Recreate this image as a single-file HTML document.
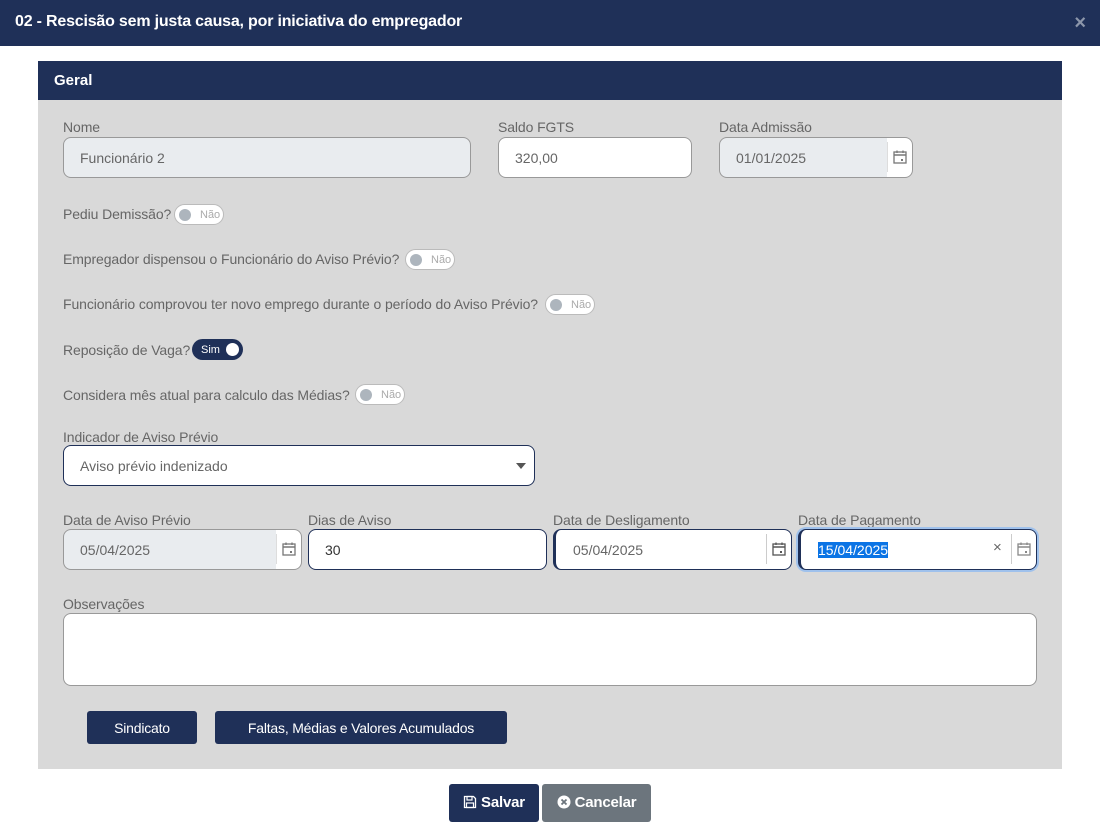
<!DOCTYPE html>
<html><head><meta charset="utf-8"><style>
*{box-sizing:border-box;margin:0;padding:0}
body{width:1100px;height:834px;background:#fff;font-family:"Liberation Sans",sans-serif;font-size:14px;color:#666;position:relative;overflow:hidden}
.a{position:absolute}
.top{left:0;top:0;width:1100px;height:46px;background:#1f3058;color:#fff;font-weight:bold;font-size:16px;padding:13px 0 0 15px;letter-spacing:-0.2px}
.x{right:14px;top:12px;color:#8c96aa;font-size:20px;font-weight:bold}
.panel{left:38px;top:61px;width:1024px;height:708px;background:#d9d9d9}
.ph{left:38px;top:61px;width:1024px;height:39px;background:#1f3058;color:#fff;font-weight:bold;font-size:15px;padding:11px 0 0 16px}
.lbl{font-size:14px;color:#666;letter-spacing:-0.1px}
.in{border:1px solid #999;border-radius:8px;background:#fff;color:#666;padding:12px 0 0 16px;height:41px}
.dis{background:#e9ecef}
.nav{border-color:#1f3058}
.tg{border:1px solid #bbb;border-radius:11px;background:#fff;height:21px;width:50px;font-size:11px;color:#aaa;padding:4px 0 0 25px}
.tg:before{content:"";position:absolute;left:4px;top:4px;width:12px;height:12px;border-radius:50%;background:#adb5bd}
.cal{width:16px;height:16px}
.btn{background:#1f3058;color:#fff;border-radius:3px;font-size:14px;text-align:center;padding-top:9px;height:33px;letter-spacing:-0.2px}
</style></head><body>
<div class="a top">02 - Rescisão sem justa causa, por iniciativa do empregador</div>
<div class="a x">×</div>
<div class="a panel"></div>
<div class="a ph">Geral</div>

<div class="a lbl" style="left:63px;top:119px">Nome</div>
<div class="a in dis" style="left:63px;top:137px;width:408px">Funcionário 2</div>
<div class="a lbl" style="left:498px;top:119px">Saldo FGTS</div>
<div class="a in" style="left:498px;top:137px;width:194px">320,00</div>
<div class="a lbl" style="left:719px;top:119px">Data Admissão</div>
<div class="a in" style="left:719px;top:137px;width:194px;background:linear-gradient(90deg,#e9ecef 167px,#fff 167px)">01/01/2025</div>
<div class="a" style="left:887px;top:142px;width:1px;height:30px;background:#ddd"></div>

<svg class="a cal" style="left:892px;top:149px" viewBox="0 0 16 16"><rect x="2" y="3" width="12" height="11" fill="none" stroke="#777" stroke-width="1.3"/><line x1="2" y1="6" x2="14" y2="6" stroke="#777" stroke-width="1.5"/><line x1="5" y1="1.5" x2="5" y2="4" stroke="#777" stroke-width="1.3"/><line x1="11" y1="1.5" x2="11" y2="4" stroke="#777" stroke-width="1.3"/><rect x="9" y="10" width="2" height="2" fill="#777"/></svg>

<div class="a lbl" style="left:63px;top:206px">Pediu Demissão?</div>
<div class="a tg" style="left:174px;top:204px">Não</div>
<div class="a lbl" style="left:63px;top:251px">Empregador dispensou o Funcionário do Aviso Prévio?</div>
<div class="a tg" style="left:405px;top:249px">Não</div>
<div class="a lbl" style="left:63px;top:296px">Funcionário comprovou ter novo emprego durante o período do Aviso Prévio?</div>
<div class="a tg" style="left:545px;top:294px">Não</div>
<div class="a lbl" style="left:63px;top:342px">Reposição de Vaga?</div>
<div class="a" style="left:192px;top:339px;width:51px;height:21px;border-radius:11px;background:#1f3058;color:#fff;font-size:11px;padding:5px 0 0 9px">Sim<span class="a" style="right:4px;top:4px;width:13px;height:13px;border-radius:50%;background:#fff"></span></div>
<div class="a lbl" style="left:63px;top:387px">Considera mês atual para calculo das Médias?</div>
<div class="a tg" style="left:355px;top:384px">Não</div>

<div class="a lbl" style="left:63px;top:429px">Indicador de Aviso Prévio</div>
<div class="a in nav" style="left:63px;top:445px;width:472px">Aviso prévio indenizado</div>
<div class="a" style="left:516px;top:463px;width:0;height:0;border-left:5px solid transparent;border-right:5px solid transparent;border-top:6px solid #555"></div>

<div class="a lbl" style="left:63px;top:512px">Data de Aviso Prévio</div>
<div class="a in" style="left:63px;top:529px;width:239px;background:linear-gradient(90deg,#e9ecef 212px,#fff 212px)">05/04/2025</div>
<div class="a" style="left:276px;top:534px;width:1px;height:30px;background:#ddd"></div>
<svg class="a cal" style="left:281px;top:541px" viewBox="0 0 16 16"><rect x="2" y="3" width="12" height="11" fill="none" stroke="#777" stroke-width="1.3"/><line x1="2" y1="6" x2="14" y2="6" stroke="#777" stroke-width="1.5"/><line x1="5" y1="1.5" x2="5" y2="4" stroke="#777" stroke-width="1.3"/><line x1="11" y1="1.5" x2="11" y2="4" stroke="#777" stroke-width="1.3"/><rect x="9" y="10" width="2" height="2" fill="#777"/></svg>

<div class="a lbl" style="left:308px;top:512px">Dias de Aviso</div>
<div class="a in nav" style="left:308px;top:529px;width:239px;color:#333">30</div>

<div class="a lbl" style="left:553px;top:512px">Data de Desligamento</div>
<div class="a in nav" style="left:553px;top:529px;width:239px;border-left-width:3px;padding-left:17px">05/04/2025</div>
<div class="a" style="left:766px;top:534px;width:1px;height:30px;background:#ccc"></div>
<svg class="a cal" style="left:771px;top:541px" viewBox="0 0 16 16"><rect x="2" y="3" width="12" height="11" fill="none" stroke="#555" stroke-width="1.3"/><line x1="2" y1="6" x2="14" y2="6" stroke="#555" stroke-width="1.5"/><line x1="5" y1="1.5" x2="5" y2="4" stroke="#555" stroke-width="1.3"/><line x1="11" y1="1.5" x2="11" y2="4" stroke="#555" stroke-width="1.3"/><rect x="9" y="10" width="2" height="2" fill="#555"/></svg>

<div class="a lbl" style="left:798px;top:512px">Data de Pagamento</div>
<div class="a in" style="left:798px;top:529px;width:239px;border:1px solid #1f3058;border-left-width:3px;box-shadow:0 0 0 2px #9fc1ec;padding-left:17px"><span style="background:#0b74e5;color:#fff">15/04/2025</span></div>
<div class="a" style="left:993px;top:539px;color:#666;font-size:15px">×</div>
<div class="a" style="left:1011px;top:534px;width:1px;height:30px;background:#ccc"></div>
<svg class="a cal" style="left:1016px;top:541px" viewBox="0 0 16 16"><rect x="2" y="3" width="12" height="11" fill="none" stroke="#888" stroke-width="1.3"/><line x1="2" y1="6" x2="14" y2="6" stroke="#888" stroke-width="1.5"/><line x1="5" y1="1.5" x2="5" y2="4" stroke="#888" stroke-width="1.3"/><line x1="11" y1="1.5" x2="11" y2="4" stroke="#888" stroke-width="1.3"/><rect x="9" y="10" width="2" height="2" fill="#888"/></svg>

<div class="a lbl" style="left:63px;top:596px">Observações</div>
<div class="a in" style="left:63px;top:613px;width:974px;height:73px"></div>

<div class="a btn" style="left:87px;top:711px;width:110px">Sindicato</div>
<div class="a btn" style="left:215px;top:711px;width:292px">Faltas, Médias e Valores Acumulados</div>

<div class="a btn" style="left:449px;top:784px;width:90px;height:38px;padding-top:10px;font-weight:bold;font-size:15px"><svg width="14" height="14" viewBox="0 0 14 14" style="vertical-align:-2px"><path d="M1.5 1.5h9l2 2v9h-11z" fill="none" stroke="#fff" stroke-width="1.3"/><rect x="4" y="1.5" width="5" height="3.5" fill="none" stroke="#fff" stroke-width="1.2"/><rect x="3.5" y="8" width="7" height="4.5" fill="none" stroke="#fff" stroke-width="1.2"/></svg> Salvar</div>
<div class="a btn" style="left:542px;top:784px;width:109px;height:38px;padding-top:10px;background:#6c757d;font-weight:bold;font-size:15px"><svg width="14" height="14" viewBox="0 0 14 14" style="vertical-align:-2px"><circle cx="7" cy="7" r="6.5" fill="#fff"/><path d="M4.5 4.5l5 5M9.5 4.5l-5 5" stroke="#6c757d" stroke-width="1.8"/></svg> Cancelar</div>
</body></html>
